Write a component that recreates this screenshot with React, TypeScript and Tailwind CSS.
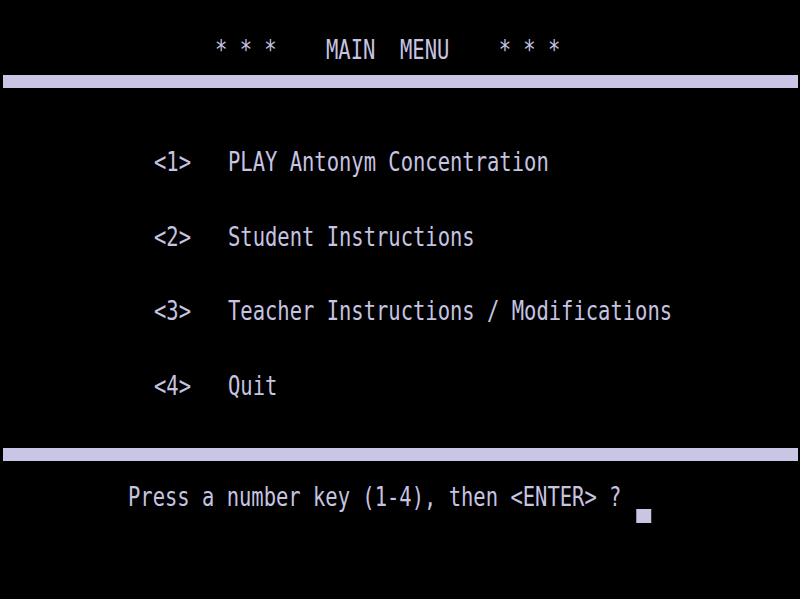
const screenFont = {
  fontFamily: '"DejaVu Sans Mono", "Liberation Mono", monospace',
};

// Narrow a monospace run to the 12.3px column grid of the text screen
function Line({ text, cursor }: { text: string; cursor?: boolean }) {
  return (
    <span
      className="inline-block origin-left scale-x-[0.788] whitespace-pre text-[26px] leading-none text-[#c6c4e0]"
      style={screenFont}
    >
      {text}
      {cursor && (
        <span className="ml-[19px] inline-block h-[14px] w-[19px] translate-y-[17px] bg-[#c8c6e4]" />
      )}
    </span>
  );
}

const options = [
  { key: '<1>', label: 'PLAY Antonym Concentration' },
  { key: '<2>', label: 'Student Instructions' },
  { key: '<3>', label: 'Teacher Instructions / Modifications' },
  { key: '<4>', label: 'Quit' },
];

export default function App() {
  return (
    <div className="flex h-[599px] w-[800px] flex-col overflow-hidden bg-black">
      <div className="mt-[30px] flex h-[40px] items-center pl-[215px]">
        <Line text="* * *    MAIN  MENU    * * *" />
      </div>

      <div className="ml-[3px] mr-[2px] mt-[5px] h-[13px] bg-[#c8c6e4]" />

      <div className="mt-[54px] flex flex-col gap-[34.5px]">
        {options.map((o) => (
          <div key={o.key} className="flex h-[40px] items-center pl-[154px]">
            <Line text={`${o.key}   ${o.label}`} />
          </div>
        ))}
      </div>

      <div className="ml-[3px] mr-[2px] mt-[42px] h-[13px] bg-[#c8c6e4]" />

      <div className="mt-[16px] flex h-[40px] items-center pl-[128px]">
        <Line text="Press a number key (1-4), then <ENTER> ?" cursor />
      </div>
    </div>
  );
}
